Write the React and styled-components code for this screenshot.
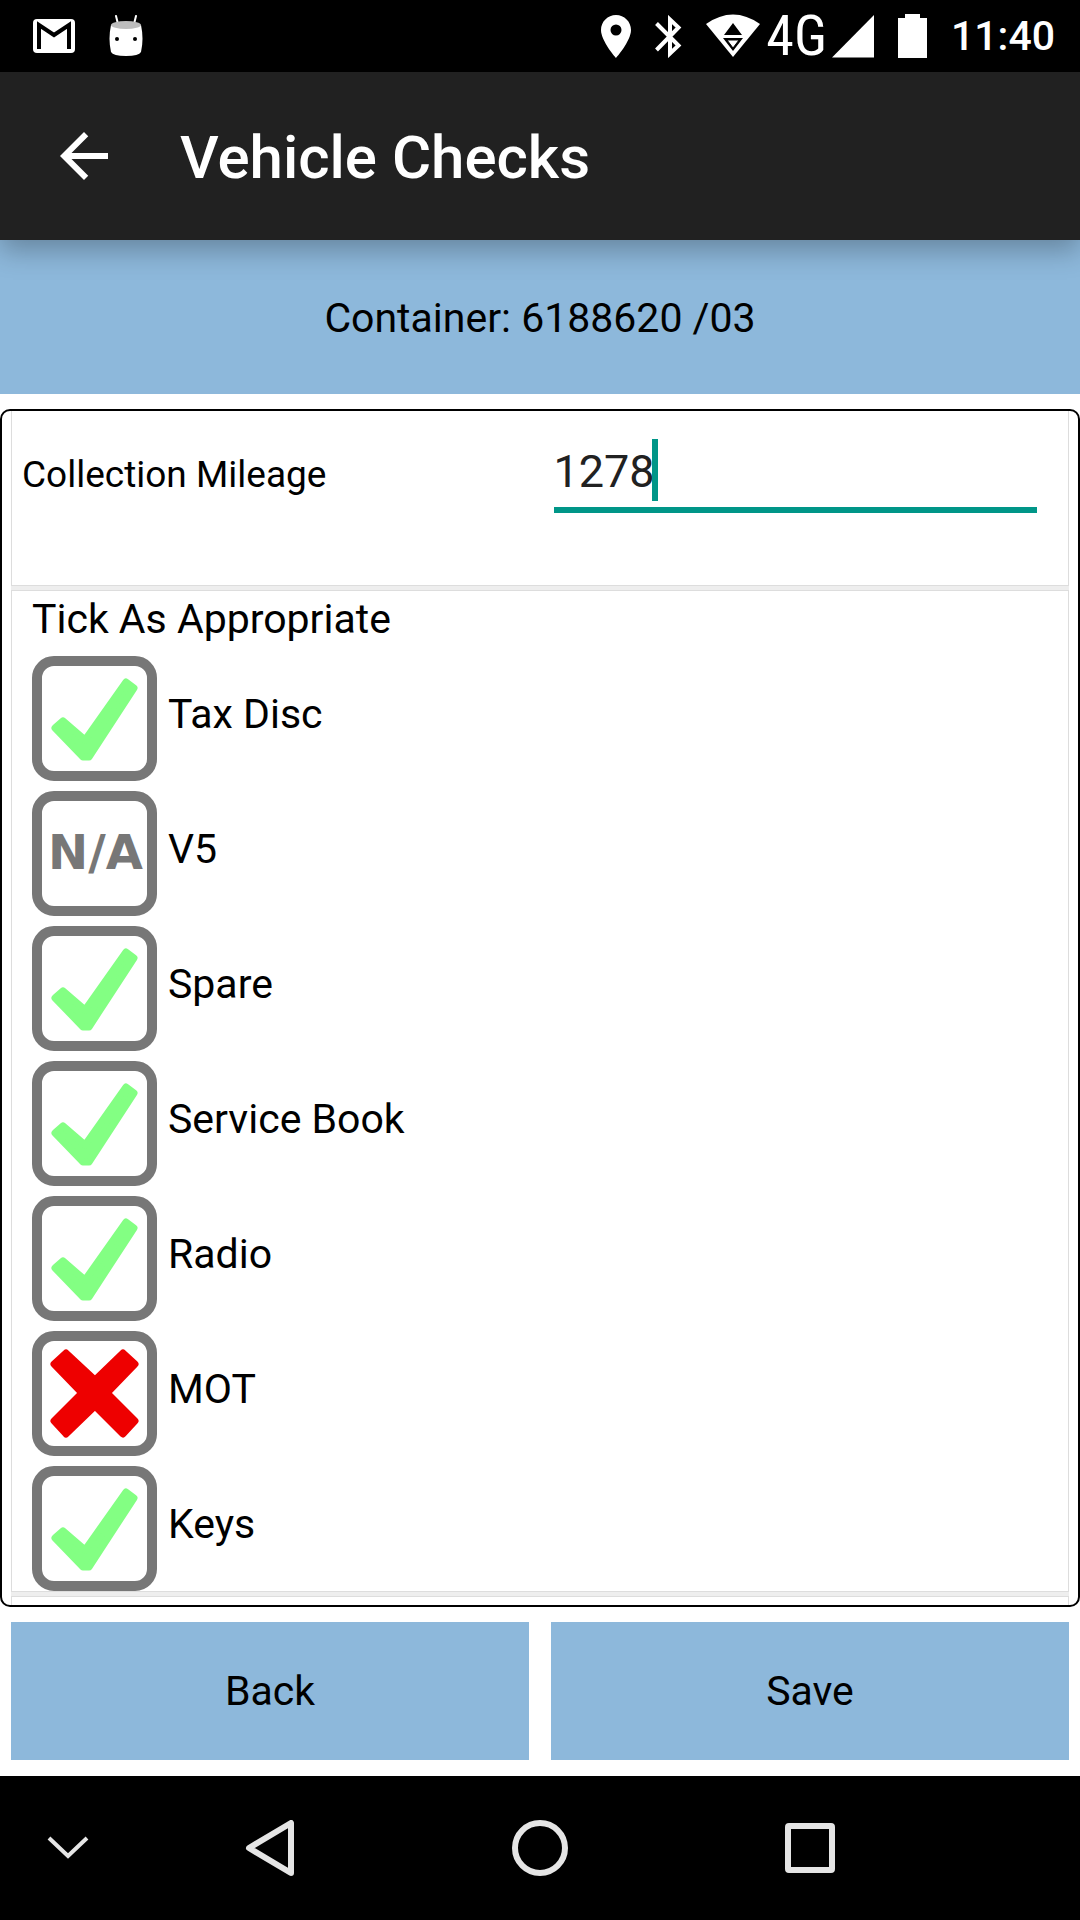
import { useState } from "react";
import styled, { createGlobalStyle } from "styled-components";

const initialChecks = [
    { id: "tax", label: "Tax Disc", value: "yes" },
    { id: "v5", label: "V5", value: "na" },
    { id: "spare", label: "Spare", value: "yes" },
    { id: "service", label: "Service Book", value: "yes" },
    { id: "radio", label: "Radio", value: "yes" },
    { id: "mot", label: "MOT", value: "no" },
    { id: "keys", label: "Keys", value: "yes" }
];

const nextValue = { yes: "no", no: "na", na: "yes" };

const Mark = ({ value }) => {
    if (value === "na") {
        return <NotApplicable>N/A</NotApplicable>;
    }
    return (
        <MarkIcon viewBox="0 0 125 125" $color={value === "yes" ? "#83ff83" : "#ee0000"}>
            {value === "yes" ? (
                <path d="M23 72 31 65 53 84 94 26 102 32 57 101H51Z" />
            ) : (
                <path d="M34 22 63 49 91 22 103 33 75 62 103 90 91 103 63 75 34 103 22 90 50 62 22 33Z" />
            )}
        </MarkIcon>
    );
};

const StatusIcons = () => (
    <StatusBar>
        <StatusGroup>
            <svg width="42" height="34" viewBox="0 0 42 34">
                <rect width="42" height="34" rx="4" fill="#fff" />
                <path d="M6 30V6L21 16 36 6V30" fill="none" stroke="#000" strokeWidth="4" />
            </svg>
            <svg width="34" height="42" viewBox="0 0 34 42">
                <path d="M7 1 9 9M27 1 25 9" stroke="#fff" strokeWidth="2" strokeLinecap="round" />
                <path d="M2 10Q17 15 32 10Q35 24 32 37Q30 41 17 41Q4 41 2 37Q-1 24 2 10Z" fill="#fff" />
                <ellipse cx="17" cy="10" rx="15" ry="4" fill="#bdbdbd" />
                <circle cx="8" cy="24" r="2" />
                <circle cx="26" cy="24" r="2" />
            </svg>
        </StatusGroup>
        <StatusGroup $end>
            <svg width="30" height="43" viewBox="0 0 30 43" fill="#fff">
                <path fillRule="evenodd" d="M15 0C6.700 0 0 6.700 0 15C0 26 15 43 15 43S30 26 30 15C30 6.700 23.300 0 15 0ZM15 9.500A5.500 5.500 0 1 1 15 20.500A5.500 5.500 0 1 1 15 9.500Z" />
            </svg>
            <svg width="27" height="43" viewBox="0 0 27 43" fill="none" stroke="#fff" strokeWidth="4">
                <path d="M1.500 8.500 23.500 30.500 15 38.500V4.500L23.500 12.500 1.500 35" />
            </svg>
            <svg width="54" height="44" viewBox="0 0 54 44">
                <path d="M0 10Q27 -9 54 10L27 43Z" fill="#fff" />
                <path d="M27 9 36 21H18ZM17 24H37L27 37Z" />
                <path d="M21 26H33L27 34Z" fill="#fff" stroke="#000" strokeWidth="1" />
            </svg>
            <Network>4G</Network>
            <svg width="42" height="43" viewBox="0 0 42 43">
                <path d="M0 42.500 42 0V42.500Z" fill="#fff" />
            </svg>
            <svg width="29" height="44" viewBox="0 0 29 44">
                <path d="M0 4H7V0H22V4H29V44H0Z" fill="#fff" />
            </svg>
            <Clock>11:40</Clock>
        </StatusGroup>
    </StatusBar>
);

const App = () => {
    const [mileage, setMileage] = useState("1278");
    const [checks, setChecks] = useState(initialChecks);

    const toggle = (id) =>
        setChecks(checks.map((c) => (c.id === id ? { ...c, value: nextValue[c.value] } : c)));

    return (
        <Screen>
            <GlobalStyle />
            <StatusIcons />
            <AppBar>
                <IconButton aria-label="Navigate up">
                    <svg width="72" height="72" viewBox="0 0 24 24" fill="#fff">
                        <path d="M20 11H7.830l5.590-5.590L12 4l-8 8 8 8 1.410-1.410L7.830 13H20v-2z" />
                    </svg>
                </IconButton>
                <Title>Vehicle Checks</Title>
            </AppBar>
            <Banner>Container: 6188620 /03</Banner>
            <Frame>
                <SectionList>
                    <MileageSection>
                        <MileageLabel htmlFor="mileage">Collection Mileage</MileageLabel>
                        <Field>
                            <FieldInput
                                id="mileage"
                                inputMode="numeric"
                                value={mileage}
                                onChange={(e) => setMileage(e.target.value)}
                            />
                            <Caret />
                        </Field>
                    </MileageSection>
                    <ChecksSection>
                        <SectionTitle>Tick As Appropriate</SectionTitle>
                        <CheckList>
                            {checks.map((check) => (
                                <CheckRow key={check.id}>
                                    <BoxStack>
                                        <CheckBox
                                            type="checkbox"
                                            checked={check.value === "yes"}
                                            onChange={() => toggle(check.id)}
                                        />
                                        <Mark value={check.value} />
                                    </BoxStack>
                                    <CheckText>{check.label}</CheckText>
                                </CheckRow>
                            ))}
                        </CheckList>
                    </ChecksSection>
                    <NextSection />
                </SectionList>
            </Frame>
            <Actions>
                <ActionButton>Back</ActionButton>
                <ActionButton>Save</ActionButton>
            </Actions>
            <NavBar>
                <IconButton aria-label="Hide keyboard">
                    <svg width="42" height="24" viewBox="0 0 42 24" fill="none" stroke="#e5e5e5" strokeWidth="4">
                        <path d="M2 2 21 20 40 2" />
                    </svg>
                </IconButton>
                <IconButton aria-label="Back">
                    <svg width="56" height="56" viewBox="0 0 56 56" fill="none" stroke="#e5e5e5" strokeWidth="6" strokeLinejoin="round">
                        <path d="M49 3V53L7 28Z" />
                    </svg>
                </IconButton>
                <IconButton aria-label="Home">
                    <svg width="56" height="56" viewBox="0 0 56 56" fill="none" stroke="#e5e5e5" strokeWidth="6">
                        <circle cx="28" cy="28" r="25" />
                    </svg>
                </IconButton>
                <IconButton aria-label="Recent apps">
                    <svg width="50" height="50" viewBox="0 0 50 50" fill="none" stroke="#e5e5e5" strokeWidth="6">
                        <rect x="3" y="3" width="44" height="44" rx="1" />
                    </svg>
                </IconButton>
            </NavBar>
        </Screen>
    );
};

export default App;

const GlobalStyle = createGlobalStyle`
    * {
        box-sizing: border-box;
    }

    body {
        margin: 0;
        background: #fff;
        color: #000;
        font-family: Roboto, "Liberation Sans", sans-serif;
        font-size: 41px;
    }

    button, input {
        font: inherit;
        color: inherit;
    }

    svg {
        display: block;
        flex: none;
    }
`;

const Screen = styled.div`
    display: flex;
    flex-direction: column;
    min-height: 100vh;
`;

const StatusBar = styled.div`
    display: flex;
    justify-content: space-between;
    align-items: center;
    height: 72px;
    padding: 0 25px 0 33px;
    background: #000;
    color: #fff;
`;

const StatusGroup = styled.div`
    display: flex;
    align-items: center;
    gap: ${({ $end }) => ($end ? "24px" : "34px")};
`;

const Network = styled.span`
    margin: 0 -19px 0 -18px;
    font-family: "Liberation Sans Narrow", "Roboto Condensed", Roboto, sans-serif;
    font-size: 56px;
    line-height: 60px;
`;

const Clock = styled.span`
    font-weight: 500;
`;

const AppBar = styled.header`
    position: relative;
    z-index: 1;
    display: flex;
    align-items: center;
    gap: 60px;
    height: 168px;
    padding: 0 48px;
    background: #212121;
    color: #fff;
    box-shadow: 0 10px 26px rgba(0, 0, 0, 0.28);
`;

const IconButton = styled.button`
    display: flex;
    justify-content: center;
    align-items: center;
    padding: 0;
    border: 0;
    background: none;
`;

const Title = styled.h1`
    margin: 0;
    padding-top: 2px;
    font-size: 60px;
    font-weight: 500;
`;

const Banner = styled.div`
    display: flex;
    justify-content: center;
    align-items: center;
    height: 154px;
    padding-top: 2px;
    background: #8db8db;
`;

const Frame = styled.main`
    display: flex;
    flex: 1;
    margin: 15px 0;
    padding: 0 9px;
    border: 2px solid #000;
    border-radius: 10px;
    overflow: hidden;
`;

const SectionList = styled.div`
    display: flex;
    flex: 1;
    flex-direction: column;
    gap: 4px;
    background: #eee;
`;

const Section = styled.section`
    background: #fff;
    border: 1px solid #ddd;
`;

const MileageSection = styled(Section)`
    display: grid;
    grid-template-columns: 1fr 1fr;
    column-gap: 48px;
    align-items: baseline;
    min-height: 175px;
    padding: 28px 31px 0 10px;
    border-top: 0;
`;

const MileageLabel = styled.label`
    font-size: 37px;
`;

const Field = styled.div`
    display: flex;
    padding-bottom: 6px;
    border-bottom: 6px solid #009688;
`;

const FieldInput = styled.input`
    field-sizing: content;
    height: 62px;
    padding: 2px 0 0;
    border: 0;
    outline: 0;
    background: none;
    color: #212121;
    font-size: 45px;
`;

const Caret = styled.span`
    width: 6px;
    margin-left: -3px;
    background: #009688;
`;

const ChecksSection = styled(Section)`
    padding: 4px 20px 0;
`;

const SectionTitle = styled.h2`
    margin: 0 0 12px;
    font-size: 41px;
    font-weight: 400;
    line-height: 49px;
`;

const CheckList = styled.div`
    display: flex;
    flex-direction: column;
    align-items: flex-start;
    gap: 10px;
`;

const CheckRow = styled.label`
    display: flex;
    align-items: center;
    gap: 11px;
`;

const BoxStack = styled.span`
    display: grid;
    grid-template: 125px / 125px;
    place-items: center;

    > * {
        grid-area: 1 / 1;
    }
`;

const CheckBox = styled.input`
    appearance: none;
    width: 125px;
    height: 125px;
    margin: 0;
    border: 10px solid #777;
    border-radius: 22px;
`;

const MarkIcon = styled.svg`
    width: 125px;
    fill: ${({ $color }) => $color};
    stroke: ${({ $color }) => $color};
    stroke-width: 7px;
    stroke-linejoin: round;
    pointer-events: none;
`;

const NotApplicable = styled.span`
    padding: 0 0 4px 2px;
    color: #777;
    font-family: "DejaVu Sans", sans-serif;
    font-size: 48px;
    font-weight: 700;
    pointer-events: none;
`;

const CheckText = styled.span`
    padding-bottom: 8px;
    line-height: 49px;
`;

const NextSection = styled(Section)`
    flex: 1;
    min-height: 9px;
    border-bottom: 0;
`;

const Actions = styled.div`
    display: grid;
    grid-template-columns: 1fr 1fr;
    gap: 22px;
    padding: 0 11px 16px;
`;

const ActionButton = styled.button`
    height: 138px;
    border: 0;
    background: #8db8db;
`;

const NavBar = styled.nav`
    display: grid;
    grid-template-columns: 1fr 2fr 2fr 2fr 1fr;
    height: 144px;
    background: #000;
`;
